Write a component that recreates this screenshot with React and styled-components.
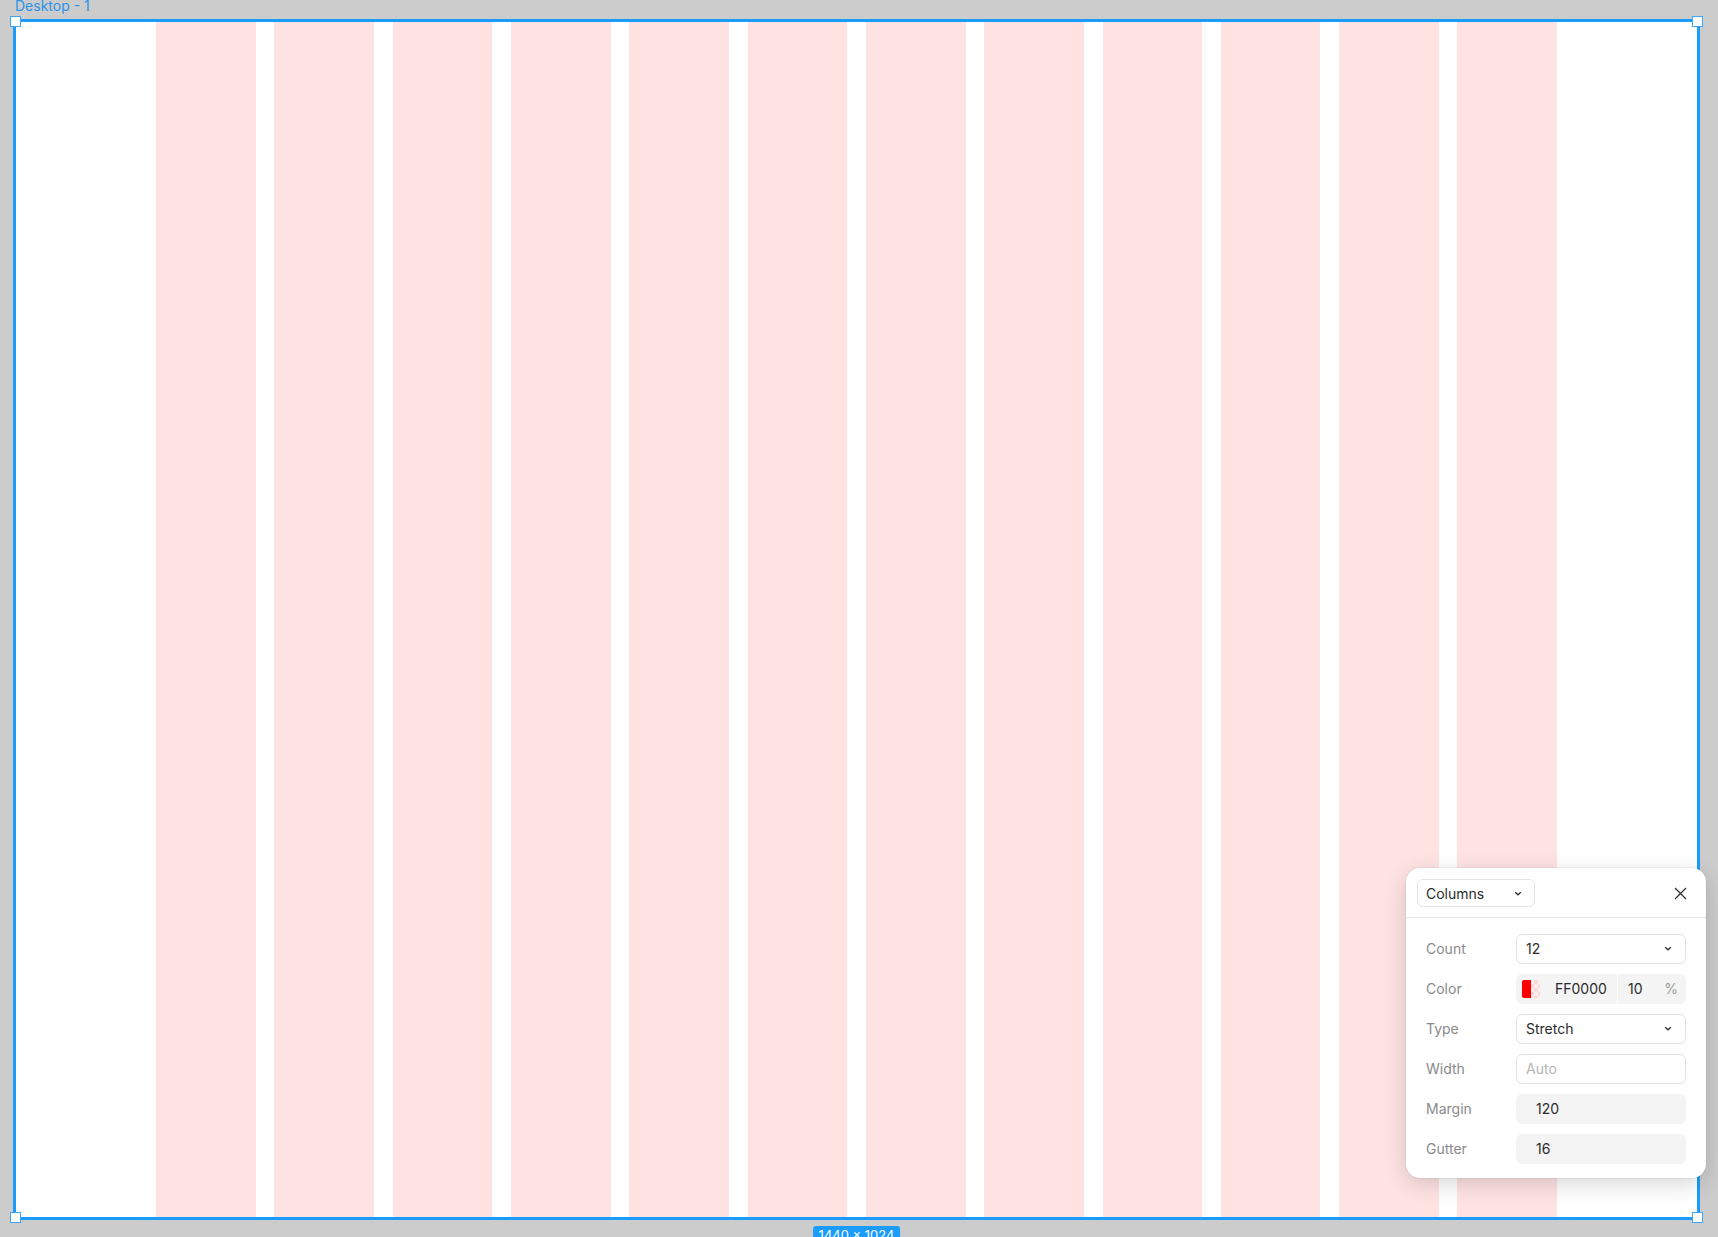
import React from "react";
import styled, { createGlobalStyle } from "styled-components";

const GlobalStyle = createGlobalStyle`
  html, body {
    margin: 0;
    padding: 0;
    background: #cccccc;
    overflow: hidden;
  }
  body {
    font-family: Inter, "Noto Sans", "Liberation Sans", sans-serif;
  }
`;

const COLUMNS = 12;

const rows = [
  { label: "Count", kind: "select", value: "12" },
  { label: "Color", kind: "color" },
  { label: "Type", kind: "select", value: "Stretch" },
  { label: "Width", kind: "outline", value: "Auto", placeholder: true },
  { label: "Margin", kind: "filled", value: "120" },
  { label: "Gutter", kind: "filled", value: "16" },
];

const Chevron = () => (
  <svg width="8" height="5" viewBox="0 0 8 5" fill="none">
    <path d="M1.2 1.2L4 3.8L6.8 1.2" stroke="#333" strokeWidth="1.4" />
  </svg>
);

const CloseIcon = () => (
  <svg width="13" height="13" viewBox="0 0 13 13" fill="none">
    <path d="M1 1L12 12M12 1L1 12" stroke="#333" strokeWidth="1.3" />
  </svg>
);

const App = () => {
  return (
    <StCanvas>
      <GlobalStyle />
      <StFrameName>Desktop - 1</StFrameName>
      <StFrame>
        <StGrid>
          {Array.from({ length: COLUMNS }).map((_, i) => (
            <StColumn key={i} />
          ))}
        </StGrid>

        <StHandle $v="top" $h="left" />
        <StHandle $v="top" $h="right" />
        <StHandle $v="bottom" $h="left" />
        <StHandle $v="bottom" $h="right" />

        <StSizeTag>1440 × 1024</StSizeTag>

        <StPanel>
          <StPanelHeader>
            <StLayoutSelect>
              <span>Columns</span>
              <Chevron />
            </StLayoutSelect>
            <StCloseButton>
              <CloseIcon />
            </StCloseButton>
          </StPanelHeader>
          <StPanelBody>
            {rows.map((row) => (
              <StRow key={row.label}>
                <StLabel>{row.label}</StLabel>
                {row.kind === "select" && (
                  <StField $variant="outline">
                    <span>{row.value}</span>
                    <Chevron />
                  </StField>
                )}
                {row.kind === "outline" && (
                  <StField $variant="outline">
                    <StPlaceholder>{row.value}</StPlaceholder>
                  </StField>
                )}
                {row.kind === "filled" && (
                  <StField $variant="filled" $indent="19px">
                    <span>{row.value}</span>
                  </StField>
                )}
                {row.kind === "color" && (
                  <StColorField>
                    <StHexPart>
                      <StSwatch />
                      <span>FF0000</span>
                    </StHexPart>
                    <StOpacityPart>
                      <span>10</span>
                      <StUnit>%</StUnit>
                    </StOpacityPart>
                  </StColorField>
                )}
              </StRow>
            ))}
          </StPanelBody>
        </StPanel>
      </StFrame>
    </StCanvas>
  );
};

export default App;

const StCanvas = styled.div`
  width: 1718px;
  height: 1237px;
  overflow: hidden;
  background: #cccccc;
  padding-left: 13px;
  box-sizing: border-box;
`;

const StFrameName = styled.div`
  margin-top: -3px;
  margin-bottom: 5px;
  padding-left: 2px;
  height: 17px;
  font-size: 14px;
  line-height: 17px;
  color: #2a93ea;
`;

const StFrame = styled.div`
  position: relative;
  width: 1687px;
  height: 1201px;
  box-sizing: border-box;
  border: 3px solid #1b9cfb;
  background: #ffffff;
`;

const StGrid = styled.div`
  display: flex;
  height: 100%;
  padding: 0 140px;
  gap: 18.7px;
  box-sizing: border-box;
`;

const StColumn = styled.div`
  flex: 1;
  background: #ffe3e3;
`;

const StHandle = styled.div`
  position: absolute;
  ${({ $v }) => $v}: -6px;
  ${({ $h }) => $h}: -6px;
  width: 11px;
  height: 11px;
  box-sizing: border-box;
  background: #ffffff;
  border: 1.5px solid #3aa6f5;
`;

const StSizeTag = styled.div`
  position: absolute;
  top: calc(100% + 9px);
  left: 50%;
  transform: translateX(-50%);
  padding: 0 6px;
  border-radius: 3px;
  background: #1b9cfb;
  color: #ffffff;
  font-size: 13px;
  line-height: 18px;
  white-space: nowrap;
`;

const StPanel = styled.div`
  position: absolute;
  right: -9px;
  bottom: 39px;
  width: 300px;
  height: 310px;
  box-sizing: border-box;
  background: #ffffff;
  border-radius: 14px;
  box-shadow: 0 6px 22px rgba(0, 0, 0, 0.16), 0 0 0 0.5px rgba(0, 0, 0, 0.08);
  font-size: 14px;
  color: #2b2b2b;
`;

const StPanelHeader = styled.div`
  display: flex;
  align-items: center;
  justify-content: space-between;
  padding: 11px 19px 10px 11px;
  border-bottom: 1px solid #e6e6e6;
`;

const StLayoutSelect = styled.div`
  display: flex;
  align-items: center;
  justify-content: space-between;
  width: 118px;
  height: 28px;
  box-sizing: border-box;
  padding: 0 12px 0 8px;
  border: 1px solid #e3e3e3;
  border-radius: 6px;
`;

const StCloseButton = styled.div`
  display: flex;
  align-items: center;
  justify-content: center;
  width: 13px;
  height: 13px;
`;

const StPanelBody = styled.div`
  display: flex;
  flex-direction: column;
  gap: 10.5px;
  padding: 16px 20px 0 20px;
`;

const StRow = styled.div`
  display: grid;
  grid-template-columns: 90px 1fr;
  align-items: center;
  height: 29.5px;
`;

const StLabel = styled.div`
  color: #8a8a8a;
`;

const StField = styled.div`
  display: flex;
  align-items: center;
  justify-content: space-between;
  height: 29.5px;
  box-sizing: border-box;
  padding: 0 13px 0 ${({ $indent }) => $indent || "9px"};
  border-radius: 6px;
  border: 1px solid ${({ $variant }) => ($variant === "outline" ? "#e3e3e3" : "transparent")};
  background: ${({ $variant }) => ($variant === "filled" ? "#f4f4f4" : "#ffffff")};
`;

const StPlaceholder = styled.span`
  color: #b5b5b5;
`;

const StColorField = styled.div`
  display: flex;
  height: 29.5px;
  border-radius: 6px;
  background: #f4f4f4;
  overflow: hidden;
`;

const StHexPart = styled.div`
  display: flex;
  align-items: center;
  gap: 15px;
  width: 102px;
  padding-left: 6px;
  box-sizing: border-box;
  border-right: 1px solid #ffffff;
`;

const StSwatch = styled.div`
  width: 18px;
  height: 18px;
  border-radius: 2px;
  flex-shrink: 0;
  background:
    linear-gradient(to right, #ff0000 0 50%, transparent 50% 100%),
    conic-gradient(#fcd9d9 25%, #fdeeee 0 50%, #fcd9d9 0 75%, #fdeeee 0) 0 0 / 8px 8px;
`;

const StOpacityPart = styled.div`
  display: flex;
  align-items: center;
  justify-content: space-between;
  flex: 1;
  padding: 0 8px 0 10px;
`;

const StUnit = styled.span`
  color: #9a9a9a;
`;
